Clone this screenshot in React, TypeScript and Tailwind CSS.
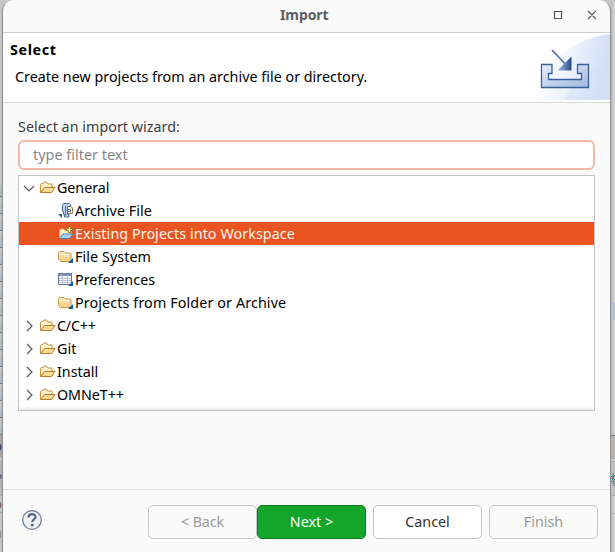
import type { ReactNode } from 'react';

function OpenFolder() {
  return (
    <svg width="16" height="16" viewBox="0 0 16 16" className="shrink-0">
      <path d="M.5 12.500V4.500l1-1h1.500l.8-1.500h2.700l1 2h4.500v3" fill="#fff3cf" stroke="#c79045" />
      <path d="M.8 12.500L4.500 7.500h10.500l-3.500 5z" fill="#fbdc92" stroke="#b87928" strokeLinejoin="round" />
    </svg>
  );
}

function ClosedFolder() {
  return (
    <svg width="16" height="16" viewBox="0 0 16 16" className="shrink-0">
      <defs>
        <linearGradient id="folder" x1="0" y1="0" x2="0" y2="1">
          <stop offset="0" stopColor="#fff0cb" />
          <stop offset="1" stopColor="#f3ca7d" />
        </linearGradient>
      </defs>
      <path d="M.5 10.500V4l1-1.500h4.500l1.500 1.500h4.500l1 1v7l-.5.500h-10z" fill="url(#folder)" stroke="#c99648" />
      <path d="M1.500 5.500h10" stroke="#fff8e4" />
      <path d="M15 9v5H10z" fill="#12589f" />
    </svg>
  );
}

function ArchiveIcon() {
  return (
    <svg width="16" height="16" viewBox="0 0 16 16" className="shrink-0">
      <path d="M8.500 2.500h3.500l2.500 2.500v5.500h-6z" fill="#fff5cf" stroke="#8d805c" />
      <path d="M4.500 1.500l1-1h6l1 1v2h-3v8h1.500v2.500h-4.500v-2.500h-1v-3h-1z" fill="#c2d3eb" stroke="#49699d" />
      <path d="M7.500 3v10" stroke="#6280af" strokeWidth="1.200" />
      <path d="M9.500 6.500h3v2h-3z" fill="#fff" stroke="#526f9f" />
      <path d="M0 11h4v4z" fill="#16669c" />
    </svg>
  );
}

function ProjectFolder() {
  return (
    <svg width="16" height="16" viewBox="0 0 16 16" className="shrink-0">
      <path d="M1.500 12.500V4.500l1-1.500h3L7 4.500h6V8" fill="#fff0c8" stroke="#e0b468" />
      <path d="M1.300 12.500L5 8h10l-3.500 4.500z" fill="#a9d0f2" stroke="#4b82b9" strokeLinejoin="round" />
      <path d="M11.500 0v7M8 3.500h7" stroke="#8c7426" strokeWidth="2.600" />
      <path d="M11.500 1v5M9 3.500h5" stroke="#fff5a5" strokeWidth="1.200" />
    </svg>
  );
}

function TableIcon() {
  return (
    <svg width="16" height="16" viewBox="0 0 16 16" className="shrink-0">
      <path d="M.5 1.500h13v11H.5z" fill="#fff" stroke="#65799b" />
      <path d="M1 2h12v2H1z" fill="#8297bd" />
      <path d="M1 6.500h12M1 8.500h12M1 10.500h12M4.500 4v8M9.500 4v8" stroke="#b5c1d5" />
      <path d="M15 9v5H10z" fill="#12589f" />
    </svg>
  );
}

function Expander({ open = false }: { open?: boolean }) {
  return (
    <svg width="12" height="12" viewBox="0 0 12 12" className="shrink-0" fill="none" stroke="#595959" strokeWidth="1.200">
      <path d={open ? 'M1 4l5 5 5-5' : 'M4 1l5 5-5 5'} />
    </svg>
  );
}

function Category({ label, tracking, open }: { label: string; tracking: string; open?: boolean }) {
  return (
    <div className="flex h-[23px] items-center pl-1">
      <Expander open={open} />
      <span className="ml-[5px] flex"><OpenFolder /></span>
      <span className={`ml-[1px] whitespace-pre text-black ${tracking}`}>{label}</span>
    </div>
  );
}

function Wizard({ icon, label, tracking, selected }: { icon: ReactNode; label: string; tracking: string; selected?: boolean }) {
  return (
    <div className={`flex h-[23px] items-center pl-[39px] ${selected ? 'bg-[#e95420] text-[#fff4ee]' : 'text-black'}`}>
      {icon}
      <span className={`ml-[1px] whitespace-pre ${tracking}`}>{label}</span>
    </div>
  );
}

function BannerArt() {
  return (
    <svg width="76" height="67" viewBox="0 0 76 67" className="shrink-0">
      <defs>
        <linearGradient id="wash" x1="0" y1="0" x2="1" y2=".2">
          <stop offset="0" stopColor="#fff" />
          <stop offset=".5" stopColor="#f0f5fd" />
          <stop offset="1" stopColor="#d0def6" />
        </linearGradient>
        <linearGradient id="tray" x1="0" y1="0" x2="1" y2="1">
          <stop offset="0" stopColor="#e7effa" />
          <stop offset="1" stopColor="#9fb9df" />
        </linearGradient>
        <linearGradient id="head" x1="0" y1="0" x2="1" y2="0">
          <stop offset="0" stopColor="#a8c3e7" />
          <stop offset="1" stopColor="#204b89" />
        </linearGradient>
      </defs>
      <path d="M1 67C2 35 37 5 76 1v66z" fill="url(#wash)" />
      <path d="M30 67C42 43 58 34 76 31v36z" fill="#d4e1f7" opacity=".55" />
      <path d="M7.500 31.500h10.500v9h-3.500v6h33v-6h-4v-9h11v23h-47z" fill="url(#tray)" stroke="#365f9c" strokeWidth="1.300" />
      <path d="M18 17l17 18" stroke="#5077ad" strokeWidth="1.800" />
      <path d="M37.500 23.500v14H23.500z" fill="url(#head)" />
    </svg>
  );
}

function LeftEdge() {
  return (
    <div className="flex w-[2px] shrink-0 flex-col overflow-hidden bg-[#c5c5c5] pt-[180px]">
      {Array.from({ length: 15 }, (_, i) => (
        <div key={i} className="h-[17px] w-full shrink-0 border-b border-[#737980] bg-linear-to-b from-[#c5c5c5] to-[#9ebdc9]" />
      ))}
      <div className="flex h-[22px] shrink-0 justify-end bg-[#aaa8a5] text-[14px] leading-[22px] text-[#26374b]"><span>o</span></div>
      <div className="h-[5px] shrink-0 border-y border-[#aaa] bg-[#c5c3c0]" />
      <div className="flex h-[33px] shrink-0 items-center justify-end bg-[#b6b4b2] text-[14px] text-[#485b80]"><span>?</span></div>
      <div className="flex h-[18px] shrink-0 items-center justify-end border-y border-[#aaa] text-[14px] text-[#795a44]"><span>o</span></div>
      <div className="flex h-[39px] shrink-0 items-center justify-end text-[14px] text-[#978c82]"><span>a</span></div>
    </div>
  );
}

function RightEdge() {
  return (
    <div className="flex w-1 shrink-0 flex-col overflow-hidden bg-linear-to-r from-[#b9b9b9] to-[#d5d5d5] pt-[303px]">
      <div className="h-[17px] shrink-0 bg-[#b4c1d0]" />
      <div className="mt-[115px] h-[23px] shrink-0 border-t border-[#777] bg-[#b5b2af]" />
      <div className="h-[4px] shrink-0 border-y border-[#aaa] bg-[#d1cfcd]" />
      <div className="flex h-[34px] shrink-0 items-center border-b border-[#aaa] bg-[#c2c0be]">
        <svg width="4" height="14" viewBox="0 0 4 14" fill="none" stroke="#327871"><path d="M2 1v4M0 4l4 4M4 3L1 7l3 3M0 9l3 2v3" /></svg>
      </div>
      <div className="h-[18px] shrink-0 border-b border-[#b5b5b5]" />
    </div>
  );
}

const button = 'flex h-[34px] w-[109px] items-center justify-center rounded-[5px] border whitespace-pre';

export default function App() {
  return (
    <div className="flex h-[552px] w-[615px] overflow-hidden bg-[#c9c9c9] font-['Noto_Sans',sans-serif] text-[14.300px] leading-5 text-[#3d3d3d]">
      <LeftEdge />
      <main className="flex w-[609px] shrink-0 flex-col overflow-hidden rounded-t-[11px] border-x border-[#8c8c8c] bg-[#fafafa]">
        <header className="flex h-[33px] shrink-0 items-center border-b border-[#cfcfcf] pb-[2px]">
          <h1 className="ml-[277px] w-[49px] font-bold whitespace-pre text-[#5e5e5e] text-[14px] tracking-[-0.100px]">Import</h1>
          <svg width="44" height="12" viewBox="0 0 44 12" className="ml-[223px]" fill="none" stroke="#555" strokeWidth="1.200">
            <path d="M2.500 2.500h7v7h-7zM36 2l8 8M44 2l-8 8" />
          </svg>
        </header>
        <section className="flex h-[70px] shrink-0 justify-between border-b border-[#d7d7d7] bg-white text-black">
          <div className="flex flex-col pt-[7px] pl-[7px]">
            <h2 className="font-bold tracking-[0.640px]">Select</h2>
            <p className="mt-[7px] ml-[5px] whitespace-pre tracking-[0.020px]">Create new projects from an archive file or directory.</p>
          </div>
          <BannerArt />
        </section>
        <section className="flex h-[386px] shrink-0 flex-col px-[15px] pt-[14px]">
          <label className="whitespace-pre tracking-[0.030px]">Select an import wizard:</label>
          <input className="mt-[3px] h-[30px] w-full shrink-0 rounded-[6px] border-2 border-[#f2b9a6] bg-white px-[13px] pb-[2px] tracking-[0.050px] outline-none placeholder:text-[#858585]" placeholder="type filter text" />
          <div className="mt-[5px] flex h-[236px] shrink-0 flex-col border border-[#c2c2c2] bg-white">
            <Category open label="General" tracking="tracking-[-0.060px]" />
            <Wizard icon={<ArchiveIcon />} label="Archive File" tracking="tracking-[0.080px]" />
            <Wizard selected icon={<ProjectFolder />} label="Existing Projects into Workspace" tracking="tracking-[0.080px]" />
            <Wizard icon={<ClosedFolder />} label="File System" tracking="tracking-[0.080px]" />
            <Wizard icon={<TableIcon />} label="Preferences" tracking="tracking-[0.050px]" />
            <Wizard icon={<ClosedFolder />} label="Projects from Folder or Archive" tracking="tracking-[0.120px]" />
            <Category label="C/C++" tracking="tracking-[-0.200px]" />
            <Category label="Git" tracking="tracking-[0.100px]" />
            <Category label="Install" tracking="tracking-[0px]" />
            <Category label="OMNeT++" tracking="tracking-[-0.060px]" />
            <div className="mt-auto h-1 bg-linear-to-b from-white to-[#ececec]" />
          </div>
        </section>
        <footer className="flex h-[63px] shrink-0 border-t border-[#dadada] pt-[15px] pl-[19px]">
          <button className="mt-[5px] h-5 w-5">
            <svg width="20" height="20" viewBox="0 0 20 20" fill="none">
              <circle cx="10" cy="10" r="9.300" fill="#f0f0f0" stroke="#60759a" strokeWidth="1.200" />
              <path d="M6.500 7.500c0-4.500 7-4.500 7-.5 0 2.500-3.200 2.300-3.200 5" stroke="#536989" strokeWidth="2.200" />
              <circle cx="10.200" cy="15" r="1.500" fill="#536989" />
            </svg>
          </button>
          <div className="ml-[106px] flex">
            <button className={`${button} border-[#c8c8c8] tracking-[-0.150px] text-[#999]`}>{'< Back'}</button>
            <button className={`${button} border-[#0d791b] bg-[#14a52b] text-white`}>{'Next >'}</button>
            <button className={`${button} ml-[7px] border-[#c4c4c4] bg-white text-[#333]`}>Cancel</button>
            <button className={`${button} ml-[7px] border-[#c8c8c8] text-[#999]`}>Finish</button>
          </div>
        </footer>
      </main>
      <RightEdge />
    </div>
  );
}
